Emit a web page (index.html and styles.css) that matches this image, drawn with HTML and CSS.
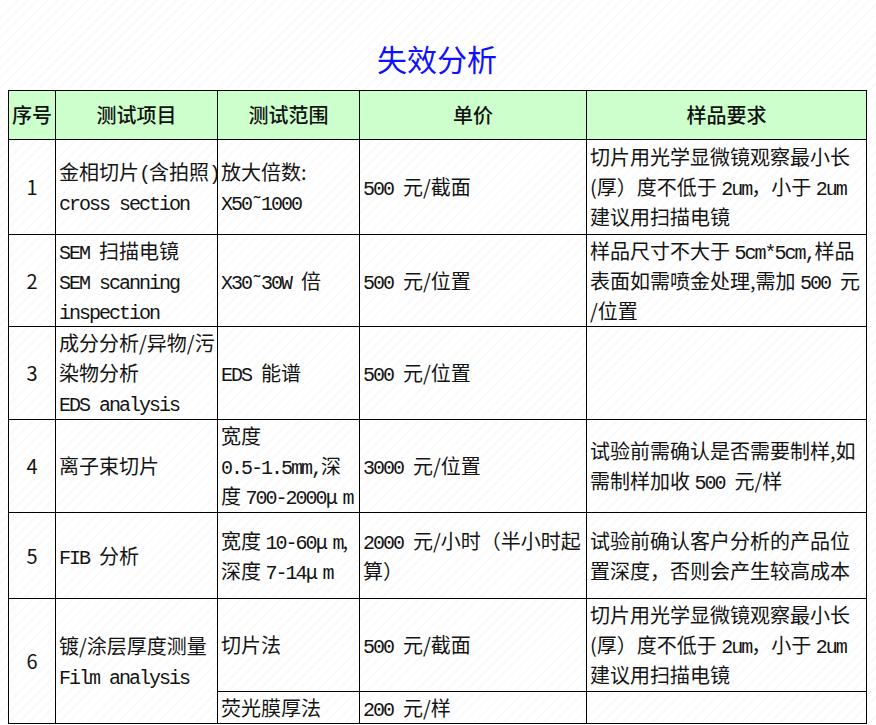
FILE: index.html
```html
<!DOCTYPE html>
<html lang="zh-CN">
<head>
<meta charset="utf-8">
<title>失效分析</title>
<link rel="stylesheet" href="styles.css">
</head>
<body>
<div class="page">
  <h1 class="title">失效分析</h1>
  <table class="grid">
    <colgroup>
      <col class="c1"><col class="c2"><col class="c3"><col class="c4"><col class="c5">
    </colgroup>
    <thead>
      <tr class="head">
        <th>序号</th><th>测试项目</th><th>测试范围</th><th>单价</th><th>样品要求</th>
      </tr>
    </thead>
    <tbody>
      <tr class="r1">
        <td class="num">1</td>
        <td>金相切片<span class="en">(</span>含拍照<span class="en">)</span><br><span class="en">cross section</span></td>
        <td>放大倍数:<br><span class="en">X50˜1000</span></td>
        <td><span class="en">500 </span>元/截面</td>
        <td>切片用光学显微镜观察最小长<br>(厚）度不低于 <span class="en">2um</span>，小于 <span class="en">2um</span><br>建议用扫描电镜</td>
      </tr>
      <tr class="r2">
        <td class="num">2</td>
        <td><span class="en">SEM </span>扫描电镜<br><span class="en">SEM scanning</span><br><span class="en">inspection</span></td>
        <td><span class="en">X30˜30W </span>倍</td>
        <td><span class="en">500 </span>元/位置</td>
        <td>样品尺寸不大于 <span class="en">5cm*5cm,</span>样品<br>表面如需喷金处理,需加 <span class="en">500 </span>元<br>/位置</td>
      </tr>
      <tr class="r3">
        <td class="num">3</td>
        <td>成分分析/异物/污<br>染物分析<br><span class="en">EDS analysis</span></td>
        <td><span class="en">EDS </span>能谱</td>
        <td><span class="en">500 </span>元/位置</td>
        <td></td>
      </tr>
      <tr class="r4">
        <td class="num">4</td>
        <td>离子束切片</td>
        <td>宽度<br><span class="en">0.5-1.5mm,</span>深<br>度 <span class="en">700-2000</span>μ <span class="en">m</span></td>
        <td><span class="en">3000 </span>元/位置</td>
        <td>试验前需确认是否需要制样,如<br>需制样加收 <span class="en">500 </span>元/样</td>
      </tr>
      <tr class="r5">
        <td class="num">5</td>
        <td><span class="en">FIB </span>分析</td>
        <td>宽度 <span class="en">10-60</span>μ <span class="en">m</span>,<br>深度 <span class="en">7-14</span>μ <span class="en">m</span></td>
        <td><span class="en">2000 </span>元/小时（半小时起<br>算）</td>
        <td>试验前确认客户分析的产品位<br>置深度，否则会产生较高成本</td>
      </tr>
      <tr class="r6">
        <td class="num" rowspan="2">6</td>
        <td rowspan="2">镀/涂层厚度测量<br><span class="en">Film analysis</span></td>
        <td>切片法</td>
        <td><span class="en">500 </span>元/截面</td>
        <td>切片用光学显微镜观察最小长<br>(厚）度不低于 <span class="en">2um</span>，小于 <span class="en">2um</span><br>建议用扫描电镜</td>
      </tr>
      <tr class="r7">
        <td>荧光膜厚法</td>
        <td><span class="en">200 </span>元/样</td>
        <td></td>
      </tr>
    </tbody>
  </table>
</div>
</body>
</html>
```

FILE: styles.css
```css
html, body {
  margin: 0;
  padding: 0;
}

body {
  background-color: #ffffff;
  background-image: repeating-linear-gradient(135deg, rgba(0,0,0,0) 0px, rgba(0,0,0,0) 5px, rgba(0,0,0,0.018) 5px, rgba(0,0,0,0.018) 7px);
  font-family: "Noto Sans CJK SC", "Noto Sans", sans-serif;
  color: #141414;
  width: 876px;
  height: 725px;
  overflow: hidden;
}

.page {
  padding: 0 8px;
}

.title {
  margin: 0;
  padding-top: 40px;
  height: 50px;
  line-height: 36px;
  font-size: 30px;
  font-weight: 400;
  color: #1010ff;
  text-align: center;
  width: 858px;
}

.grid {
  border-collapse: collapse;
  table-layout: fixed;
  width: 858px;
  font-size: 20px;
  line-height: 30px;
}

.c1 { width: 47px; }
.c2 { width: 162px; }
.c3 { width: 142px; }
.c4 { width: 227px; }
.c5 { width: 280px; }

.grid th,
.grid td {
  border: 1px solid #000;
  padding: 0 0 0 3px;
  vertical-align: middle;
  text-align: left;
  white-space: nowrap;
  overflow: visible;
}

.grid th {
  background: #ccffcc;
  text-align: center;
  font-weight: 500;
  padding: 0;
  color: #111;
}

.grid td.num {
  text-align: center;
  padding: 0;
}

.en {
  font-family: "Liberation Mono", monospace;
  letter-spacing: -2px;
  line-height: 1;
}

.head { height: 49px; }
.r1 { height: 95px; }
.r2 { height: 92px; }
.r3 { height: 93px; }
.r4 { height: 93px; }
.r5 { height: 86px; }
.r6 { height: 93px; }
.r7 { height: 32px; }
```
